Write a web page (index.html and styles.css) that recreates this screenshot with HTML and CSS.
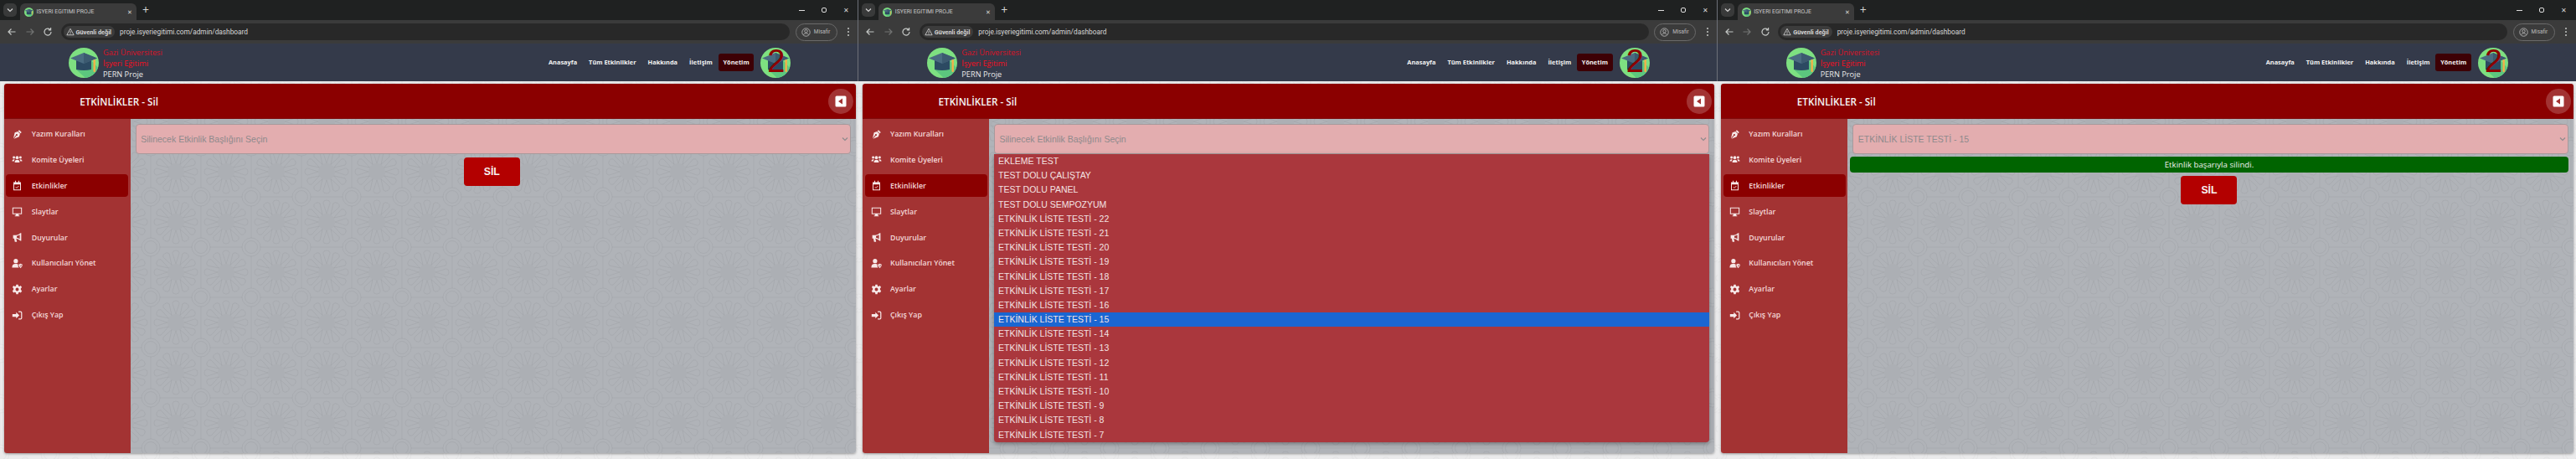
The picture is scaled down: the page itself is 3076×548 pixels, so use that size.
FILE: index.html
```html
<!DOCTYPE html>
<html>
<head>
    <title>ISYERI EGITIMI PROJE</title>
    <link rel="stylesheet" href="styles.css">
</head>
<body>
    <svg class="sprite" xmlns="http://www.w3.org/2000/svg">
        <symbol id="logo" viewBox="0 0 36 36">
            <circle cx="18" cy="18" r="18" fill="#7ee081"/>
            <path d="M9 26 L27 15 L35 24 A18 18 0 0 1 20 36 Z" fill="#5cc67e"/>
            <path d="M9 14 H27 V26 Q18 28 9 26 Z" fill="#2c4a62"/>
            <path d="M2 12.5 L18 6 L34 12.5 L18 19 Z" fill="#4a6b80"/>
            <path d="M18 6 L34 12.5 L18 19 Z" fill="#3c5a70"/>
            <rect x="29.5" y="14" width="2.4" height="15" rx="1" fill="#f2b04a"/>
        </symbol>
        <symbol id="i-pen" viewBox="0 0 16 16">
            <path d="M11 1.5 L14.5 5 L13 6.5 L9.5 3 Z M9 3.7 L12.3 7 L10.8 11.5 L3.2 14.5 L7 9.8 A1.2 1.2 0 1 0 6.2 9 L2.4 13.7 L4.5 5.2 Z" fill="currentColor"/>
        </symbol>
        <symbol id="i-users" viewBox="0 0 16 16">
            <circle cx="3.2" cy="5" r="1.8" fill="currentColor"/>
            <circle cx="12.8" cy="5" r="1.8" fill="currentColor"/>
            <circle cx="8" cy="5.2" r="2.3" fill="currentColor"/>
            <path d="M0.5 10 Q0.8 7.6 3.2 7.6 Q4.2 7.6 4.6 8.1 Q3.6 9 3.4 10.4 H1 Z M15.5 10 Q15.2 7.6 12.8 7.6 Q11.8 7.6 11.4 8.1 Q12.4 9 12.6 10.4 H15 Z M4.4 12.4 Q4.4 8.4 8 8.4 Q11.6 8.4 11.6 12.4 Z" fill="currentColor"/>
        </symbol>
        <symbol id="i-cal" viewBox="0 0 16 16">
            <path d="M5 1 H6.2 V3 H9.8 V1 H11 V3 H13.5 V15 H2.5 V3 H5 Z M3.7 6.4 V13.8 H12.3 V6.4 Z" fill="currentColor"/>
            <path d="M5.8 10 L7.4 11.6 L10.4 8.6" fill="none" stroke="currentColor" stroke-width="1.1"/>
        </symbol>
        <symbol id="i-desk" viewBox="0 0 16 16">
            <path d="M1 2 H15 V12 H10 L10.5 14 H11.5 V15 H4.5 V14 H5.5 L6 12 H1 Z M2.3 3.3 V10.7 H13.7 V3.3 Z" fill="currentColor"/>
        </symbol>
        <symbol id="i-horn" viewBox="0 0 16 16">
            <path d="M14 1.5 V13 L12.8 13 Q10 10.2 6.6 9.6 L7.6 14.5 H4.6 L3.6 9.5 H2 V4.5 H6.5 Q10 4 12.8 1.5 Z M11.8 4 Q9.6 5.4 7.4 5.7 V8.3 Q9.6 8.7 11.8 10.4 Z" fill="currentColor"/>
        </symbol>
        <symbol id="i-user" viewBox="0 0 16 16">
            <circle cx="6" cy="4.5" r="3.2" fill="currentColor"/>
            <path d="M0.5 14 Q0.5 8.7 5.5 8.7 H7 Q8.6 8.7 9.4 9.4 L9.4 12 Q9.6 13.2 10.6 14 Z" fill="currentColor"/>
            <path d="M13 8.4 L15.8 9.6 Q15.8 13.6 13 15 Q10.2 13.6 10.2 9.6 Z M13 10 V13.4 Q14.4 12.4 14.5 10.6 Z" fill="currentColor"/>
        </symbol>
        <symbol id="i-gear" viewBox="0 0 16 16">
            <path d="M6.6 1 H9.4 L9.8 3 L11.4 3.7 L13.2 2.6 L14.9 5 L13.4 6.4 V8.6 L15 10.2 L13.4 12.8 L11.4 12 L9.8 13 L9.4 15 H6.6 L6.2 13 L4.6 12 L2.6 12.8 L1 10.2 L2.6 8.6 V6.4 L1.1 5 L2.8 2.6 L4.6 3.7 L6.2 3 Z M8 5.6 A2.4 2.4 0 1 0 8 10.4 A2.4 2.4 0 1 0 8 5.6 Z" fill="currentColor" fill-rule="evenodd"/>
        </symbol>
        <symbol id="i-exit" viewBox="0 0 16 16">
            <path d="M6.5 3.5 L11.2 8 L6.5 12.5 V10 H1 V6 H6.5 Z" fill="currentColor"/>
            <path d="M10 2.5 H13 Q14.5 2.5 14.5 4 V12 Q14.5 13.5 13 13.5 H10" fill="none" stroke="currentColor" stroke-width="1.5"/>
        </symbol>
        <symbol id="i-collapse" viewBox="0 0 14 14">
            <path d="M2 0.5 H12 Q13.5 0.5 13.5 2 V12 Q13.5 13.5 12 13.5 H2 Q0.5 13.5 0.5 12 V2 Q0.5 0.5 2 0.5 Z M9 3.5 L4 7 L9 10.5 Z" fill="#fff" fill-rule="evenodd"/>
        </symbol>
        <symbol id="c-warn" viewBox="0 0 12 12">
            <path d="M6 1.5 L11 10.5 H1 Z M6 5 V8 M6 8.8 V9.6" fill="none" stroke="currentColor"/>
        </symbol>
        <symbol id="c-guest" viewBox="0 0 14 14">
            <circle cx="7" cy="7" r="6" fill="none" stroke="currentColor" stroke-width="1.1"/>
            <circle cx="7" cy="5.4" r="2.2" fill="none" stroke="currentColor" stroke-width="1.1"/>
            <path d="M3 11 Q4 8.6 7 8.6 Q10 8.6 11 11" fill="none" stroke="currentColor" stroke-width="1.1"/>
        </symbol>
        <symbol id="c-back" viewBox="0 0 12 12">
            <path d="M10.5 6 H2 M5.5 2.5 L2 6 L5.5 9.5" fill="none" stroke="currentColor" stroke-width="1.2"/>
        </symbol>
        <symbol id="c-next" viewBox="0 0 12 12">
            <path d="M1.5 6 H10 M6.5 2.5 L10 6 L6.5 9.5" fill="none" stroke="currentColor" stroke-width="1.2"/>
        </symbol>
        <symbol id="c-reload" viewBox="0 0 12 12">
            <path d="M10 6 A4 4 0 1 1 8.8 3.2 M9.6 1 V3.8 H6.8" fill="none" stroke="currentColor" stroke-width="1.2"/>
        </symbol>
        <symbol id="c-down" viewBox="0 0 10 10">
            <path d="M2 3.5 L5 6.5 L8 3.5" fill="none" stroke="currentColor" stroke-width="1.2"/>
        </symbol>
    </svg>

    <div class="shots">

        <!-- first shot: nothing selected -->
        <section class="shot">
            <div class="tabstrip">
                <span class="tab-list"><svg class="ico10"><use href="#c-down"/></svg></span>
                <div class="tab">
                    <svg class="favicon"><use href="#logo"/></svg>
                    <span class="tab-title">ISYERI EGITIMI PROJE</span>
                    <span class="tab-close">✕</span>
                </div>
                <span class="tab-new">+</span>
                <div class="win-btns">
                    <span class="win-min"></span>
                    <span class="win-max"></span>
                    <span class="win-close">✕</span>
                </div>
            </div>
            <div class="toolbar">
                <svg class="ico12"><use href="#c-back"/></svg>
                <svg class="ico12 dim"><use href="#c-next"/></svg>
                <svg class="ico12"><use href="#c-reload"/></svg>
                <div class="omnibox">
                    <span class="chip"><svg class="ico10"><use href="#c-warn"/></svg>Güvenli değil</span>
                    <span class="url">proje.isyeriegitimi.com/admin/dashboard</span>
                </div>
                <span class="guest"><svg class="ico11"><use href="#c-guest"/></svg>Misafir</span>
                <span class="kebab"><i></i><i></i><i></i></span>
            </div>
            <nav class="navbar">
                <svg class="logo"><use href="#logo"/></svg>
                <div class="brand">
                    <span class="brand-dark">Gazi Üniversitesi</span>
                    <span class="brand-red">İşyeri Eğitimi</span>
                    <span>PERN Proje</span>
                </div>
                <div class="nav-links">
                    <a>Anasayfa</a>
                    <a>Tüm Etkinlikler</a>
                    <a>Hakkında</a>
                    <a>İletişim</a>
                    <a class="nav-active">Yönetim</a>
                </div>
                <div class="avatar">
                    <svg class="logo"><use href="#logo"/></svg>
                    <span class="avatar-num">2</span>
                </div>
            </nav>
            <div class="page">
                <div class="panel">
                    <header class="panel-head">
                        <h2>ETKİNLİKLER - Sil</h2>
                        <span class="collapse"><svg class="ico14"><use href="#i-collapse"/></svg></span>
                    </header>
                    <div class="panel-body">
                        <ul class="sidebar">
                            <li><svg><use href="#i-pen"/></svg>Yazım Kuralları</li>
                            <li><svg><use href="#i-users"/></svg>Komite Üyeleri</li>
                            <li class="active"><svg><use href="#i-cal"/></svg>Etkinlikler</li>
                            <li><svg><use href="#i-desk"/></svg>Slaytlar</li>
                            <li><svg><use href="#i-horn"/></svg>Duyurular</li>
                            <li><svg><use href="#i-user"/></svg>Kullanıcıları Yönet</li>
                            <li><svg><use href="#i-gear"/></svg>Ayarlar</li>
                            <li><svg><use href="#i-exit"/></svg>Çıkış Yap</li>
                        </ul>
                        <main class="content">
                            <div class="select">Silinecek Etkinlik Başlığını Seçin<svg class="ico10"><use href="#c-down"/></svg></div>
                            <button class="btn-delete">SİL</button>
                        </main>
                    </div>
                </div>
            </div>
        </section>

        <!-- second shot: dropdown open -->
        <section class="shot">
            <div class="tabstrip">
                <span class="tab-list"><svg class="ico10"><use href="#c-down"/></svg></span>
                <div class="tab">
                    <svg class="favicon"><use href="#logo"/></svg>
                    <span class="tab-title">ISYERI EGITIMI PROJE</span>
                    <span class="tab-close">✕</span>
                </div>
                <span class="tab-new">+</span>
                <div class="win-btns">
                    <span class="win-min"></span>
                    <span class="win-max"></span>
                    <span class="win-close">✕</span>
                </div>
            </div>
            <div class="toolbar">
                <svg class="ico12"><use href="#c-back"/></svg>
                <svg class="ico12 dim"><use href="#c-next"/></svg>
                <svg class="ico12"><use href="#c-reload"/></svg>
                <div class="omnibox">
                    <span class="chip"><svg class="ico10"><use href="#c-warn"/></svg>Güvenli değil</span>
                    <span class="url">proje.isyeriegitimi.com/admin/dashboard</span>
                </div>
                <span class="guest"><svg class="ico11"><use href="#c-guest"/></svg>Misafir</span>
                <span class="kebab"><i></i><i></i><i></i></span>
            </div>
            <nav class="navbar">
                <svg class="logo"><use href="#logo"/></svg>
                <div class="brand">
                    <span class="brand-dark">Gazi Üniversitesi</span>
                    <span class="brand-red">İşyeri Eğitimi</span>
                    <span>PERN Proje</span>
                </div>
                <div class="nav-links">
                    <a>Anasayfa</a>
                    <a>Tüm Etkinlikler</a>
                    <a>Hakkında</a>
                    <a>İletişim</a>
                    <a class="nav-active">Yönetim</a>
                </div>
                <div class="avatar">
                    <svg class="logo"><use href="#logo"/></svg>
                    <span class="avatar-num">2</span>
                </div>
            </nav>
            <div class="page">
                <div class="panel">
                    <header class="panel-head">
                        <h2>ETKİNLİKLER - Sil</h2>
                        <span class="collapse"><svg class="ico14"><use href="#i-collapse"/></svg></span>
                    </header>
                    <div class="panel-body">
                        <ul class="sidebar">
                            <li><svg><use href="#i-pen"/></svg>Yazım Kuralları</li>
                            <li><svg><use href="#i-users"/></svg>Komite Üyeleri</li>
                            <li class="active"><svg><use href="#i-cal"/></svg>Etkinlikler</li>
                            <li><svg><use href="#i-desk"/></svg>Slaytlar</li>
                            <li><svg><use href="#i-horn"/></svg>Duyurular</li>
                            <li><svg><use href="#i-user"/></svg>Kullanıcıları Yönet</li>
                            <li><svg><use href="#i-gear"/></svg>Ayarlar</li>
                            <li><svg><use href="#i-exit"/></svg>Çıkış Yap</li>
                        </ul>
                        <main class="content">
                            <div class="select">Silinecek Etkinlik Başlığını Seçin<svg class="ico10"><use href="#c-down"/></svg></div>
                            <button class="btn-delete">SİL</button>
                            <ul class="options">
                                <li>EKLEME TEST</li>
                                <li>TEST DOLU ÇALIŞTAY</li>
                                <li>TEST DOLU PANEL</li>
                                <li>TEST DOLU SEMPOZYUM</li>
                                <li>ETKİNLİK LİSTE TESTİ - 22</li>
                                <li>ETKİNLİK LİSTE TESTİ - 21</li>
                                <li>ETKİNLİK LİSTE TESTİ - 20</li>
                                <li>ETKİNLİK LİSTE TESTİ - 19</li>
                                <li>ETKİNLİK LİSTE TESTİ - 18</li>
                                <li>ETKİNLİK LİSTE TESTİ - 17</li>
                                <li>ETKİNLİK LİSTE TESTİ - 16</li>
                                <li class="selected">ETKİNLİK LİSTE TESTİ - 15</li>
                                <li>ETKİNLİK LİSTE TESTİ - 14</li>
                                <li>ETKİNLİK LİSTE TESTİ - 13</li>
                                <li>ETKİNLİK LİSTE TESTİ - 12</li>
                                <li>ETKİNLİK LİSTE TESTİ - 11</li>
                                <li>ETKİNLİK LİSTE TESTİ - 10</li>
                                <li>ETKİNLİK LİSTE TESTİ - 9</li>
                                <li>ETKİNLİK LİSTE TESTİ - 8</li>
                                <li>ETKİNLİK LİSTE TESTİ - 7</li>
                            </ul>
                        </main>
                    </div>
                </div>
            </div>
        </section>

        <!-- third shot: after delete -->
        <section class="shot">
            <div class="tabstrip">
                <span class="tab-list"><svg class="ico10"><use href="#c-down"/></svg></span>
                <div class="tab">
                    <svg class="favicon"><use href="#logo"/></svg>
                    <span class="tab-title">ISYERI EGITIMI PROJE</span>
                    <span class="tab-close">✕</span>
                </div>
                <span class="tab-new">+</span>
                <div class="win-btns">
                    <span class="win-min"></span>
                    <span class="win-max"></span>
                    <span class="win-close">✕</span>
                </div>
            </div>
            <div class="toolbar">
                <svg class="ico12"><use href="#c-back"/></svg>
                <svg class="ico12 dim"><use href="#c-next"/></svg>
                <svg class="ico12"><use href="#c-reload"/></svg>
                <div class="omnibox">
                    <span class="chip"><svg class="ico10"><use href="#c-warn"/></svg>Güvenli değil</span>
                    <span class="url">proje.isyeriegitimi.com/admin/dashboard</span>
                </div>
                <span class="guest"><svg class="ico11"><use href="#c-guest"/></svg>Misafir</span>
                <span class="kebab"><i></i><i></i><i></i></span>
            </div>
            <nav class="navbar">
                <svg class="logo"><use href="#logo"/></svg>
                <div class="brand">
                    <span class="brand-dark">Gazi Üniversitesi</span>
                    <span class="brand-red">İşyeri Eğitimi</span>
                    <span>PERN Proje</span>
                </div>
                <div class="nav-links">
                    <a>Anasayfa</a>
                    <a>Tüm Etkinlikler</a>
                    <a>Hakkında</a>
                    <a>İletişim</a>
                    <a class="nav-active">Yönetim</a>
                </div>
                <div class="avatar">
                    <svg class="logo"><use href="#logo"/></svg>
                    <span class="avatar-num">2</span>
                </div>
            </nav>
            <div class="page">
                <div class="panel">
                    <header class="panel-head">
                        <h2>ETKİNLİKLER - Sil</h2>
                        <span class="collapse"><svg class="ico14"><use href="#i-collapse"/></svg></span>
                    </header>
                    <div class="panel-body">
                        <ul class="sidebar">
                            <li><svg><use href="#i-pen"/></svg>Yazım Kuralları</li>
                            <li><svg><use href="#i-users"/></svg>Komite Üyeleri</li>
                            <li class="active"><svg><use href="#i-cal"/></svg>Etkinlikler</li>
                            <li><svg><use href="#i-desk"/></svg>Slaytlar</li>
                            <li><svg><use href="#i-horn"/></svg>Duyurular</li>
                            <li><svg><use href="#i-user"/></svg>Kullanıcıları Yönet</li>
                            <li><svg><use href="#i-gear"/></svg>Ayarlar</li>
                            <li><svg><use href="#i-exit"/></svg>Çıkış Yap</li>
                        </ul>
                        <main class="content">
                            <div class="select">ETKİNLİK LİSTE TESTİ - 15<svg class="ico10"><use href="#c-down"/></svg></div>
                            <div class="alert">Etkinlik başarıyla silindi.</div>
                            <button class="btn-delete">SİL</button>
                        </main>
                    </div>
                </div>
            </div>
        </section>

    </div>
</body>
</html>
```

FILE: styles.css
```css
* {
    box-sizing: border-box;
}

body {
    margin: 0;
    font-family: "Open Sans", Arial, sans-serif;
    background: #202124;
}

.sprite {
    display: none;
}

.shots {
    display: grid;
    grid-template-columns: repeat(3, 1fr);
    height: 548px;
    overflow: hidden;
}

.shot {
    display: flex;
    flex-direction: column;
    height: 548px;
    min-width: 0;
}

.ico10 {
    width: 10px;
    height: 10px;
    flex: none;
}

.ico11 {
    width: 11px;
    height: 11px;
    flex: none;
}

.ico12 {
    width: 12px;
    height: 12px;
    flex: none;
}

.ico14 {
    width: 14px;
    height: 14px;
    display: block;
}

.dim {
    opacity: 0.4;
}

/* browser chrome */
.tabstrip,
.toolbar,
.navbar {
    box-shadow: -1px 0 0 #6d7078;
}

.tabstrip {
    display: flex;
    align-items: flex-end;
    height: 24px;
    flex: none;
    padding-left: 4px;
    background: #1f2121;
    color: #d5d5d5;
}

.tab-list {
    display: flex;
    align-items: center;
    justify-content: center;
    width: 16px;
    height: 16px;
    margin-bottom: 4px;
    border-radius: 5px;
    background: #393a3a;
}

.tab {
    display: flex;
    align-items: center;
    width: 139px;
    height: 20px;
    margin-left: 4px;
    padding-left: 5px;
    border-radius: 6px 6px 0 0;
    background: #3b3b3b;
}

.favicon {
    width: 11px;
    height: 11px;
    flex: none;
}

.tab-title {
    margin-left: 3.5px;
    font-family: Roboto, Arial, sans-serif;
    font-size: 6.9px;
    color: #c8c8c8;
    white-space: nowrap;
}

.tab-close {
    margin-left: auto;
    margin-right: 5px;
    font-size: 7px;
}

.tab-new {
    margin: 0 0 3px 7px;
    font-size: 14px;
    line-height: 18px;
}

.win-btns {
    display: flex;
    align-items: center;
    gap: 20px;
    height: 24px;
    margin-left: auto;
    padding-right: 11px;
}

.win-min {
    width: 7px;
    height: 1px;
    background: #ddd;
}

.win-max {
    width: 6px;
    height: 6px;
    border: 1px solid #ddd;
    border-radius: 2px;
}

.win-close {
    width: 7px;
    font-size: 8px;
    line-height: 8px;
}

.toolbar {
    display: flex;
    align-items: center;
    height: 28px;
    flex: none;
    padding: 0 8px 0 8px;
    gap: 9.5px;
    background: #3b3b3b;
    color: #c4c7c5;
    font-family: Roboto, Arial, sans-serif;
}

.omnibox {
    display: flex;
    align-items: center;
    flex: 1;
    height: 20px;
    padding-left: 3px;
    border-radius: 10px;
    background: #282828;
}

.chip {
    display: flex;
    align-items: center;
    gap: 2px;
    height: 14px;
    padding: 0 4px 0 3px;
    border-radius: 7px;
    background: #3c3c3c;
    font-size: 7.3px;
    font-weight: 700;
    color: #d5d5d5;
    white-space: nowrap;
}

.url {
    margin-left: 6px;
    font-size: 8.3px;
    color: #d8d8d8;
    white-space: nowrap;
}

.guest {
    display: flex;
    align-items: center;
    gap: 4px;
    width: 50px;
    height: 21px;
    margin-left: -3px;
    padding-left: 6px;
    border: 1px solid #6a6a6a;
    border-radius: 11px;
    font-size: 6.4px;
    color: #bbb;
}

.kebab {
    display: flex;
    flex-direction: column;
    gap: 1.6px;
    width: 8px;
    padding-left: 3px;
}

.kebab i {
    width: 2px;
    height: 2px;
    border-radius: 50%;
    background: #c4c7c5;
}

/* site navbar */
.navbar {
    display: flex;
    align-items: center;
    height: 45px;
    flex: none;
    padding: 0 81px 0 82px;
    background: #343a4a;
}

.logo {
    display: block;
    width: 36px;
    height: 36px;
    flex: none;
}

.brand {
    display: flex;
    flex-direction: column;
    margin-left: 5px;
    padding-top: 2px;
    font-size: 9.2px;
    line-height: 13.2px;
    color: #e8e8e8;
}

.brand-dark {
    color: #dc1226;
}

.brand-red {
    color: #f80d1e;
    font-weight: 500;
}

.nav-links {
    display: flex;
    align-items: center;
    margin-left: auto;
    font-size: 7.4px;
    font-weight: 700;
    color: #f2f2f2;
}

.nav-links a {
    padding: 0 7px;
    line-height: 21px;
}

.nav-links a.nav-active {
    padding: 0 5.7px;
    border-radius: 3px;
    background: #3d0005;
}

.avatar {
    position: relative;
    margin-left: 8px;
}

.avatar-num {
    position: absolute;
    top: -6px;
    left: 8px;
    font-family: "Liberation Sans", sans-serif;
    font-size: 38px;
    line-height: 44px;
    color: #8b0000;
}

/* page */
.page {
    flex: 1;
    padding: 3px 3.4px 7px 4.7px;
    background-color: #ebebec;
    background-image: url("data:image/svg+xml,%3Csvg xmlns='http://www.w3.org/2000/svg' xmlns:xlink='http://www.w3.org/1999/xlink' width='60' height='60' viewBox='0 0 60 60'%3E%3Cdefs%3E%3Cg id='s'%3E%3Ccircle r='9' fill='%23000' fill-opacity='.02' stroke='none'/%3E%3Cg id='c'%3E%3Cg id='b'%3E%3Cpath id='p' d='M9 0 L23 -4.2 A4.4 4.4 0 0 1 23 4.2 Z'/%3E%3Cuse xlink:href='%23p' transform='rotate(30)'/%3E%3Cuse xlink:href='%23p' transform='rotate(60)'/%3E%3C/g%3E%3Cuse xlink:href='%23b' transform='rotate(90)'/%3E%3Cuse xlink:href='%23b' transform='rotate(180)'/%3E%3Cuse xlink:href='%23b' transform='rotate(270)'/%3E%3C/g%3E%3C/g%3E%3C/defs%3E%3Cg fill='none' stroke='%23000' stroke-opacity='.04' stroke-width='.8'%3E%3Cuse xlink:href='%23s' x='0' y='0'/%3E%3Cuse xlink:href='%23s' x='60' y='0'/%3E%3Cuse xlink:href='%23s' x='0' y='60'/%3E%3Cuse xlink:href='%23s' x='60' y='60'/%3E%3Ccircle cx='30' cy='30' r='7.5'/%3E%3Ccircle cx='30' cy='30' r='11'/%3E%3Cpath d='M0 30 H19 M41 30 H60 M30 0 V19 M30 41 V60'/%3E%3C/g%3E%3C/svg%3E");
    background-position: 30px -5px;
}

.panel {
    display: flex;
    flex-direction: column;
    height: 100%;
    border-radius: 3px;
    box-shadow: 0 1px 3px rgba(0, 0, 0, 0.35);
    overflow: hidden;
}

.panel-head {
    display: flex;
    align-items: center;
    justify-content: space-between;
    height: 42px;
    flex: none;
    padding: 0 3px 0 90.5px;
    background: #8b0000;
    border-bottom: 1px solid #7e0b0b;
}

.panel-head h2 {
    margin: 0;
    font-size: 11.7px;
    font-weight: 600;
    color: #f5f5f5;
}

.collapse {
    display: flex;
    align-items: center;
    justify-content: center;
    width: 30px;
    height: 30px;
    border-radius: 50%;
    background: rgba(255, 255, 255, 0.2);
}

.panel-body {
    display: flex;
    flex: 1;
    min-height: 0;
}

.sidebar {
    width: 151px;
    flex: none;
    margin: 0;
    padding: 4.5px 2.5px 0;
    list-style: none;
    background: #a33333;
    color: #f4d9d9;
}

.sidebar li {
    display: flex;
    align-items: center;
    height: 27px;
    margin-bottom: 3.9px;
    padding-left: 7px;
    border-radius: 4px;
    font-size: 8.8px;
    font-weight: 600;
    white-space: nowrap;
}

.sidebar li svg {
    width: 13px;
    height: 13px;
    flex: none;
    margin-right: 10.5px;
    color: #f6e8e8;
}

.sidebar li.active {
    background: #8b0000;
}

.content {
    position: relative;
    flex: 1;
    min-width: 0;
    padding: 6px 6px 0 3px;
    background-color: #b0b3b8;
    background-image: url("data:image/svg+xml,%3Csvg xmlns='http://www.w3.org/2000/svg' xmlns:xlink='http://www.w3.org/1999/xlink' width='60' height='60' viewBox='0 0 60 60'%3E%3Cdefs%3E%3Cg id='s'%3E%3Ccircle r='10' fill='%23000' fill-opacity='.025' stroke='none'/%3E%3Cg id='c'%3E%3Cg id='b'%3E%3Cpath id='p' d='M10 0 L23 -4.2 A4.4 4.4 0 0 1 23 4.2 Z'/%3E%3Cuse xlink:href='%23p' transform='rotate(30)'/%3E%3Cuse xlink:href='%23p' transform='rotate(60)'/%3E%3C/g%3E%3Cuse xlink:href='%23b' transform='rotate(90)'/%3E%3Cuse xlink:href='%23b' transform='rotate(180)'/%3E%3Cuse xlink:href='%23b' transform='rotate(270)'/%3E%3C/g%3E%3C/g%3E%3C/defs%3E%3Cg fill='none' stroke='%23000' stroke-opacity='.055' stroke-width='.8'%3E%3Cuse xlink:href='%23s' x='0' y='0'/%3E%3Cuse xlink:href='%23s' x='60' y='0'/%3E%3Cuse xlink:href='%23s' x='0' y='60'/%3E%3Cuse xlink:href='%23s' x='60' y='60'/%3E%3Ccircle cx='30' cy='30' r='7.5'/%3E%3Ccircle cx='30' cy='30' r='11'/%3E%3Cpath d='M0 30 H19 M41 30 H60 M30 0 V19 M30 41 V60'/%3E%3C/g%3E%3C/svg%3E");
    background-position: 54px 3px;
    font-family: "Liberation Sans", Arial, sans-serif;
}

.select {
    display: flex;
    align-items: center;
    justify-content: space-between;
    height: 36px;
    margin-left: 3px;
    padding: 0 1px 0 5.5px;
    border: 1px solid #a79a9c;
    border-radius: 4px;
    background: #e3adaf;
    font-size: 10.5px;
    color: #8e8a8c;
}

.select svg {
    color: #8e8a8c;
}

.btn-delete {
    display: block;
    width: 67px;
    height: 34px;
    margin: 4px auto 0;
    border: none;
    border-radius: 4px;
    background: #b30000;
    font-family: "Liberation Sans", Arial, sans-serif;
    font-size: 12.3px;
    font-weight: 700;
    color: #f8f2f2;
}

.alert {
    height: 19px;
    margin-top: 3px;
    border-radius: 4px;
    background: #006400;
    font-family: "Open Sans", Arial, sans-serif;
    font-size: 9.7px;
    line-height: 19px;
    text-align: center;
    color: #f0f0f0;
}

.options {
    position: absolute;
    top: 42px;
    left: 6px;
    right: 6px;
    margin: 0;
    padding: 0;
    list-style: none;
    border-radius: 0 0 4px 4px;
    background: #aa373d;
    box-shadow: 0 2px 5px rgba(0, 0, 0, 0.35);
    font-size: 10.5px;
    color: #f3e3e3;
}

.options li {
    height: 17.2px;
    padding-left: 5px;
    line-height: 17.2px;
    white-space: nowrap;
}

.options li.selected {
    background: #1a66d2;
}
```
